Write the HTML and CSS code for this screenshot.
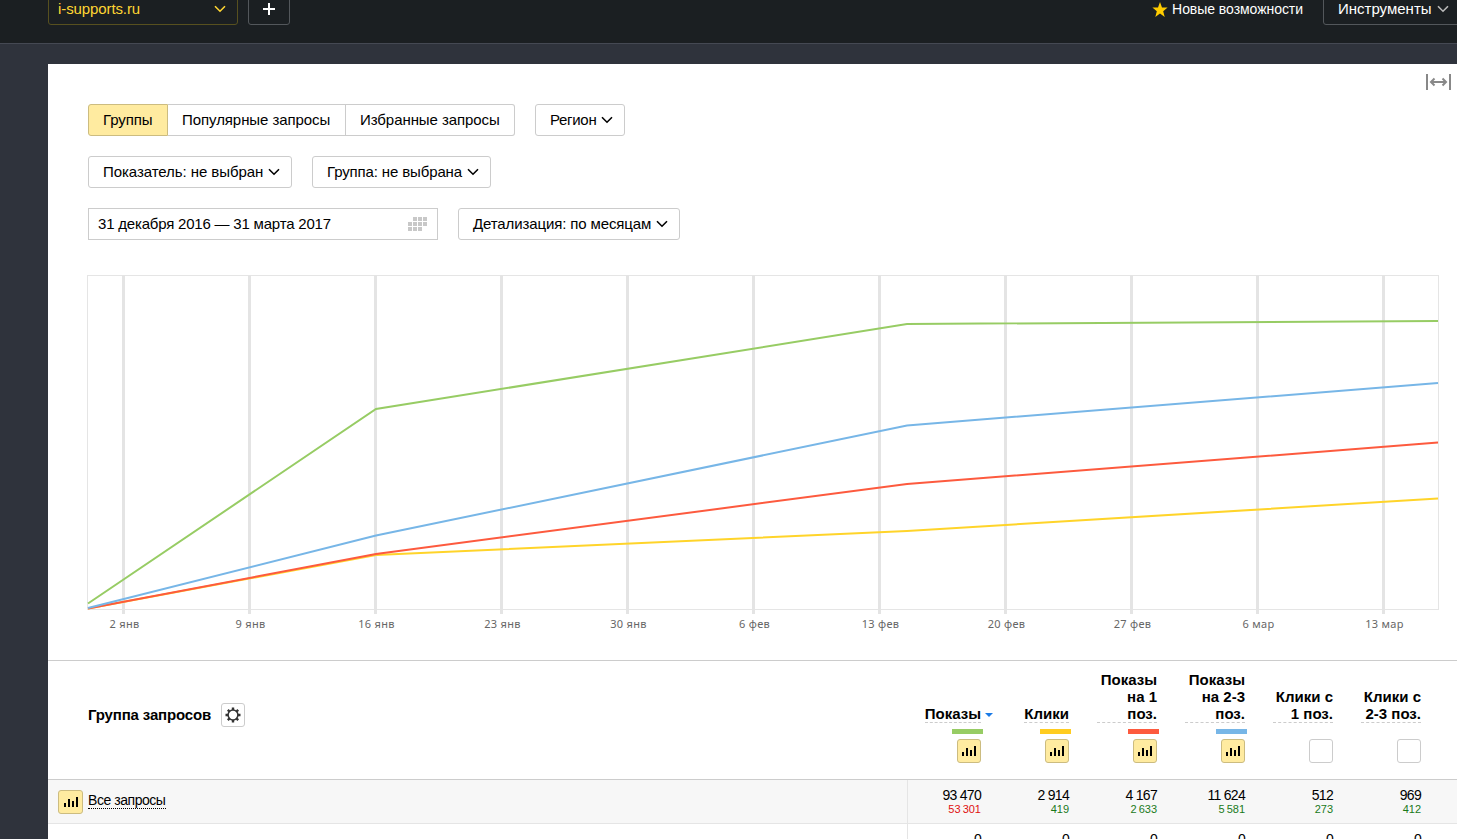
FILE: index.html
```html
<!DOCTYPE html>
<html lang="ru">
<head>
    <meta charset="UTF-8">
    <title>Группы запросов</title>
    <link rel="stylesheet" href="styles.css">
</head>
<body>
    <!-- Icons used more than once -->
    <svg class="sprite">
        <symbol id="arrow" viewBox="0 0 12 8"><path d="M1 1.2l5 5 5-5" fill="none" stroke="currentColor" stroke-width="1.6"/></symbol>
        <symbol id="bars" viewBox="0 0 16 12"><path d="M1 7h2v4H1zM5 3h2v8H5zM9 5h2v6H9zM13 1h2v10h-2z"/></symbol>
    </svg>

    <div class="header">
        <button class="site-select">i-supports.ru <svg class="arrow"><use href="#arrow"/></svg></button>
        <button class="add-btn"><svg width="12" height="12"><path d="M6 0v12M0 6h12" stroke="#fff" stroke-width="2"/></svg></button>
        <div class="news">
            <svg width="16" height="15" viewBox="0 0 16 15"><path d="M8 0l2 5.4 5.6.2-4.400 3.600L12.700 15 8 11.600 3.300 15l1.500-5.800L.4 5.600 6 5.400z" fill="#fc0"/></svg>
            <span>Новые возможности</span>
        </div>
        <button class="tools">Инструменты <svg class="arrow"><use href="#arrow"/></svg></button>
    </div>

    <div class="page">
        <svg class="stretch" width="25" height="16"><path d="M1 0v16M24 0v16M5 8h15M8.500 4.500L5 8l3.500 3.500M16.500 4.500L20 8l-3.500 3.500" fill="none" stroke="#888" stroke-width="2"/></svg>

        <div class="filters">
            <div class="row">
                <div class="tabs">
                    <button class="btn tab-groups active">Группы</button>
                    <button class="btn tab-popular">Популярные запросы</button>
                    <button class="btn tab-fav">Избранные запросы</button>
                </div>
                <button class="btn region">Регион <svg class="arrow"><use href="#arrow"/></svg></button>
            </div>
            <div class="row">
                <button class="btn metric">Показатель: не выбран <svg class="arrow"><use href="#arrow"/></svg></button>
                <button class="btn group">Группа: не выбрана <svg class="arrow"><use href="#arrow"/></svg></button>
            </div>
            <div class="row">
                <div class="date">
                    <span>31 декабря 2016 — 31 марта 2017</span>
                    <svg width="19" height="14" fill="#c8c8c8"><path d="M5 0h4v4H5zM10 0h4v4h-4zM15 0h4v4h-4zM0 5h4v4H0zM5 5h4v4H5zM10 5h4v4h-4zM15 5h4v4h-4zM0 10h4v4H0zM5 10h4v4H5zM10 10h4v4h-4z"/></svg>
                </div>
                <button class="btn detail">Детализация: по месяцам <svg class="arrow"><use href="#arrow"/></svg></button>
            </div>
        </div>

        <!-- Chart -->
        <svg class="chart" width="1370" height="362" viewBox="87 275 1370 362">
            <rect x="87.500" y="275.500" width="1351" height="334" fill="none" stroke="#e5e5e5"/>
            <path d="M123.500 275v339M249.500 275v339M375.500 275v339M501.500 275v339M627.500 275v339M753.500 275v339M879.500 275v339M1005.500 275v339M1131.500 275v339M1257.500 275v339M1383.500 275v339" stroke="#e4e4e4" stroke-width="3"/>
            <g fill="none" stroke-width="2">
                <polyline points="88,603.500 376,409 907,324 1438,321" stroke="#97cc64"/>
                <polyline points="88,608.500 376,555 907,531 1438,498.500" stroke="#ffd42a"/>
                <polyline points="88,608.500 376,554 907,484 1438,442.500" stroke="#fd5a3e"/>
                <polyline points="88,608 376,535.500 907,425.500 1438,383" stroke="#77b6e7"/>
            </g>
            <g class="chart-labels">
                <text x="124.500" y="628">2 янв</text>
                <text x="250.500" y="628">9 янв</text>
                <text x="376.500" y="628">16 янв</text>
                <text x="502.500" y="628">23 янв</text>
                <text x="628.500" y="628">30 янв</text>
                <text x="754.500" y="628">6 фев</text>
                <text x="880.500" y="628">13 фев</text>
                <text x="1006.500" y="628">20 фев</text>
                <text x="1132.500" y="628">27 фев</text>
                <text x="1258.500" y="628">6 мар</text>
                <text x="1384.500" y="628">13 мар</text>
            </g>
        </svg>

        <!-- Table -->
        <div class="table">
            <div class="table-row table-head">
                <div class="title">
                    <span>Группа запросов</span>
                    <button class="gear"><svg width="16" height="16" viewBox="-8 -8 16 16" fill="none" stroke="#333"><circle r="4.900" stroke-width="1.500"/><path d="M0-5v-2.500M0 5v2.500M5 0h2.500M-5 0h-2.500M3.500-3.500l1.700-1.700M3.500 3.500l1.700 1.700M-3.500 3.500l-1.700 1.700M-3.500-3.500l-1.700-1.700" stroke-width="2.400"/></svg></button>
                </div>
                <div class="col sorted"><span class="label">Показы</span><i class="color green"></i><button class="check on"><svg><use href="#bars"/></svg></button></div>
                <div class="col"><span class="label">Клики</span><i class="color yellow"></i><button class="check on"><svg><use href="#bars"/></svg></button></div>
                <div class="col"><span class="label wide">Показы<br>на 1<br>поз.</span><i class="color red"></i><button class="check on"><svg><use href="#bars"/></svg></button></div>
                <div class="col"><span class="label wide">Показы<br>на 2-3<br>поз.</span><i class="color blue"></i><button class="check on"><svg><use href="#bars"/></svg></button></div>
                <div class="col"><span class="label wide">Клики с<br>1 поз.</span><i class="color"></i><button class="check"></button></div>
                <div class="col"><span class="label wide">Клики с<br>2-3 поз.</span><i class="color"></i><button class="check"></button></div>
            </div>
            <div class="table-row total">
                <div class="name"><button class="check on"><svg><use href="#bars"/></svg></button><a>Все запросы</a></div>
                <div class="num">93 470<span class="diff down">53 301</span></div>
                <div class="num">2 914<span class="diff">419</span></div>
                <div class="num">4 167<span class="diff">2 633</span></div>
                <div class="num">11 624<span class="diff">5 581</span></div>
                <div class="num">512<span class="diff">273</span></div>
                <div class="num">969<span class="diff">412</span></div>
            </div>
            <div class="table-row">
                <div class="name"></div>
                <div class="num">0</div>
                <div class="num">0</div>
                <div class="num">0</div>
                <div class="num">0</div>
                <div class="num">0</div>
                <div class="num">0</div>
            </div>
        </div>
    </div>
</body>
</html>
```
FILE: styles.css
```css
* {
    box-sizing: border-box;
}

body {
    margin: 0;
    height: 839px;
    overflow: hidden;
    background: #2f333c;
    font-family: "Liberation Sans", Arial, sans-serif;
    font-size: 15px;
    color: #000;
}

button {
    font: inherit;
    color: inherit;
    padding: 0;
    background: none;
    border: 1px solid #ccc;
    border-radius: 3px;
    white-space: nowrap;
}

.sprite {
    display: none;
}

.arrow {
    width: 12px;
    height: 8px;
    margin-top: 2px;
    flex: none;
}

/* Header */
.header {
    display: flex;
    align-items: flex-start;
    height: 44px;
    padding-left: 48px;
    background: #1b1f22;
    border-bottom: 1px solid #454953;
    color: #fff;
    overflow: hidden;
}

.header button {
    display: flex;
    align-items: center;
    height: 32px;
    margin-top: -7px;
    padding-bottom: 2px;
    border-color: #53575b;
}

.header .site-select {
    width: 190px;
    padding: 0 11px 2px 9px;
    justify-content: space-between;
    color: #ffd633;
    border-color: #57501f;
    letter-spacing: -0.1px;
}

.header .add-btn {
    width: 42px;
    margin-left: 10px;
    padding-bottom: 0;
    justify-content: center;
}

.news {
    display: flex;
    align-items: center;
    gap: 4px;
    height: 18px;
    margin-left: auto;
    font-size: 14px;
    letter-spacing: -0.05px;
}

.header .tools {
    width: 142px;
    margin: -7px -8px 0 20px;
    padding-left: 14px;
    gap: 5px;
}

.tools .arrow {
    color: #bbb;
}

/* Page */
.page {
    position: relative;
    height: 775px;
    margin: 20px 0 0 48px;
    padding-top: 40px;
    background: #fff;
    overflow: hidden;
}

.stretch {
    position: absolute;
    top: 10px;
    right: 6px;
}

.filters {
    display: flex;
    flex-direction: column;
    gap: 20px;
    padding-left: 40px;
}

.row {
    display: flex;
    gap: 20px;
}

.btn {
    display: flex;
    align-items: center;
    gap: 5px;
    height: 32px;
    padding: 0 0 2px 14px;
    letter-spacing: -0.07px;
}

.tabs {
    display: flex;
}

.tab-groups {
    width: 80px;
    border-radius: 3px 0 0 3px;
}

.tab-popular {
    width: 178px;
    border-left: none;
    border-radius: 0;
}

.tab-fav {
    width: 169px;
    border-left: none;
    border-radius: 0 3px 3px 0;
}

.btn.active {
    background: #ffeba0;
    border-color: #ccbc80;
}

.region {
    width: 90px;
    letter-spacing: -0.3px;
}

.metric {
    width: 204px;
}

.group {
    width: 179px;
    letter-spacing: -0.13px;
}

.detail {
    width: 222px;
    letter-spacing: -0.12px;
}

.date {
    display: flex;
    align-items: center;
    justify-content: space-between;
    width: 350px;
    height: 32px;
    padding: 0 10px 0 9px;
    border: 1px solid #ccc;
    letter-spacing: -0.2px;
}

.date span {
    margin-bottom: 2px;
}

/* Chart */
.chart {
    display: block;
    margin: 35px 0 0 39px;
}

.chart-labels {
    font-family: "Noto Sans", sans-serif;
    font-size: 11px;
    letter-spacing: 0.3px;
    fill: #666;
    text-anchor: middle;
}

/* Table */
.table {
    margin-top: 23px;
    border-top: 1px solid #ccc;
}

.table-row {
    display: grid;
    grid-template-columns: 859px 86px repeat(5, 88px);
    height: 44px;
}

.table-head {
    height: 119px;
    font-weight: bold;
    border-bottom: 1px solid #ccc;
}

.title {
    display: flex;
    align-items: center;
    gap: 10px;
    padding: 0 0 10px 40px;
    letter-spacing: -0.15px;
}

.title span {
    margin-bottom: 2px;
}

.gear {
    display: flex;
    align-items: center;
    justify-content: center;
    width: 24px;
    height: 24px;
}

.col {
    display: flex;
    flex-direction: column;
    align-items: flex-end;
    justify-content: flex-end;
    padding: 0 12px 16px 0;
}

.label {
    position: relative;
    line-height: 17px;
    text-align: right;
    border-bottom: 1px dashed #ccc;
}

.label.wide {
    width: 60px;
    white-space: nowrap;
}

.sorted .label::after {
    content: "";
    position: absolute;
    right: -12px;
    bottom: 5px;
    border: 4px solid transparent;
    border-top-color: #1a7ae6;
    border-bottom: none;
}

.color {
    width: 31px;
    height: 5px;
    margin: 6px -2px 5px 0;
}

.green {
    background: #97cc64;
}

.yellow {
    background: #ffcc1f;
}

.red {
    background: #fd5a3e;
}

.blue {
    background: #77b6e7;
}

.check {
    display: flex;
    align-items: center;
    justify-content: center;
    flex: none;
    width: 24px;
    height: 24px;
}

.check svg {
    width: 16px;
    height: 12px;
}

.check.on {
    background: #ffeba0;
    border-color: #ccbc80;
}

.total {
    background: #f7f7f7;
    border-bottom: 1px solid #e5e5e5;
}

.name {
    display: flex;
    align-items: center;
    gap: 5px;
    padding-left: 10px;
    font-size: 14px;
    letter-spacing: -0.45px;
}

.name .check {
    width: 25px;
}

.name a {
    line-height: 15px;
    margin-bottom: 2px;
    border-bottom: 1px dotted #000;
}

.num {
    padding: 7px 12px 0 0;
    font-size: 14px;
    line-height: 16px;
    letter-spacing: -0.7px;
    text-align: right;
}

.name + .num {
    border-left: 1px solid #e5e5e5;
}

.diff {
    display: block;
    font-size: 11px;
    line-height: 12px;
    letter-spacing: 0;
    word-spacing: -1px;
    color: #1a7a1a;
}

.diff.down {
    color: #e01010;
}
```
